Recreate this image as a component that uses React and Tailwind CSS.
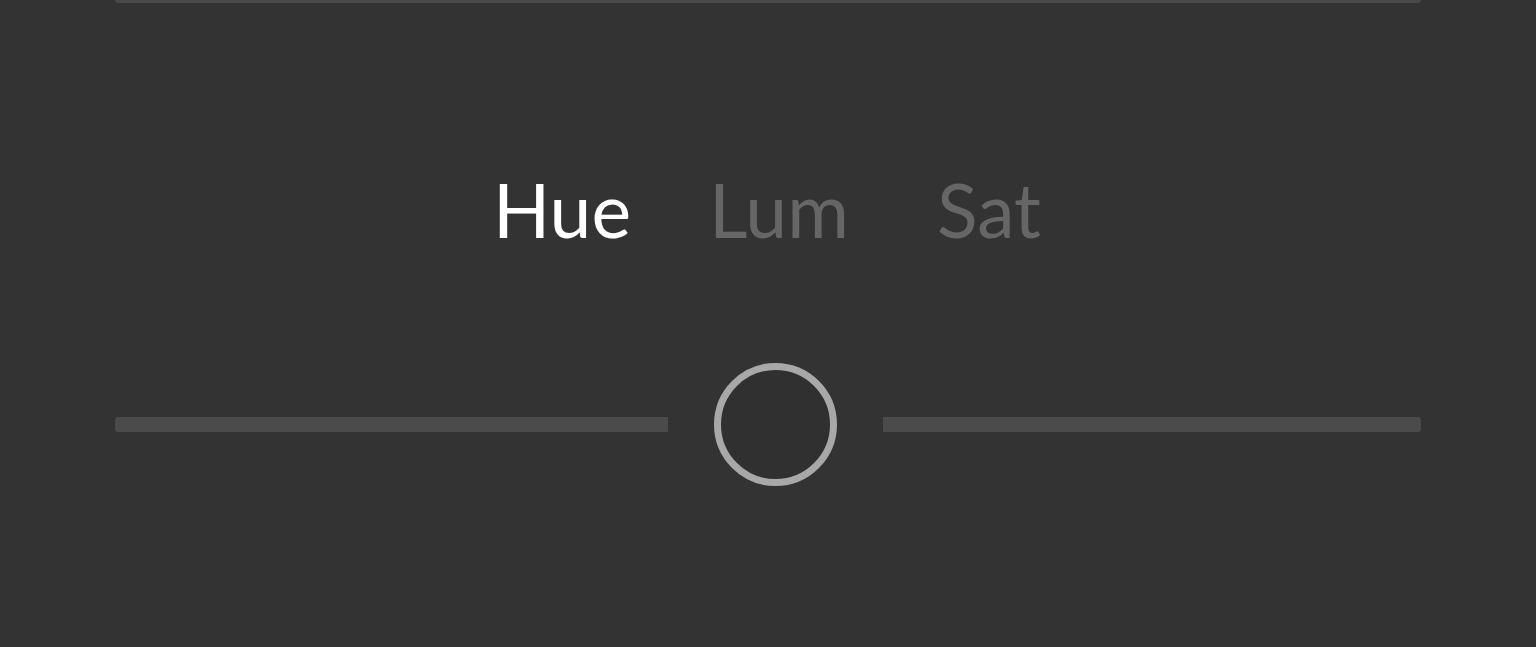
import React, { useState } from 'react';

const tabs = [
  { label: 'Hue', w: 'w-[216px]' },
  { label: 'Lum', w: 'w-[228px]' },
  { label: 'Sat', w: 'w-auto' },
];

const App = () => {
  const [active, setActive] = useState('Hue');

  return (
    <div className="w-[1536px] h-[647px] bg-[#333333] px-[115px] overflow-hidden" style={{ fontFamily: 'Lato, "Noto Sans", sans-serif' }}>
      <div className="h-[3px] bg-[#4a4a4a] rounded-b-sm"></div>

      <div className="flex pl-[378px] mt-[169px]">
        {tabs.map((t) => (
          <button
            key={t.label}
            onClick={() => setActive(t.label)}
            className={`${t.w} text-left text-[75px] leading-[75px] ${active === t.label ? 'text-white' : 'text-[#666666]'}`}
          >
            {t.label}
          </button>
        ))}
      </div>

      <div className="flex items-center mt-[116px]">
        <div className="w-[553px] h-[15px] bg-[#4b4b4b] rounded-l-[3px]"></div>
        <div className="mx-[46px] w-[123px] h-[123px] rounded-full border-[7px] border-[#a8a8a8] bg-[#303030]"></div>
        <div className="flex-1 h-[15px] bg-[#4b4b4b] rounded-r-[3px]"></div>
      </div>
    </div>
  );
};

export default App;
